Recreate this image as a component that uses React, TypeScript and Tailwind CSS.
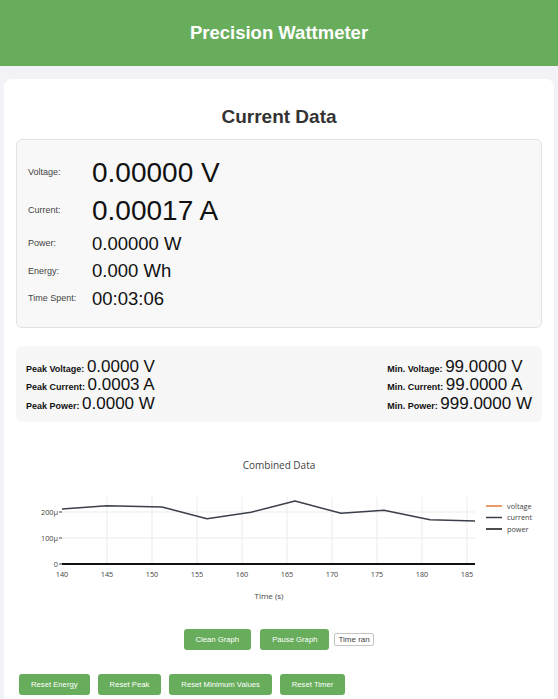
import React from 'react'

const readings = [
  { label: 'Voltage:', value: '0.00000 V', big: true },
  { label: 'Current:', value: '0.00017 A', big: true },
  { label: 'Power:', value: '0.00000 W', big: false },
  { label: 'Energy:', value: '0.000 Wh', big: false },
  { label: 'Time Spent:', value: '00:03:06', big: false },
]

const peaks = [
  { label: 'Peak Voltage:', value: '0.0000 V' },
  { label: 'Peak Current:', value: '0.0003 A' },
  { label: 'Peak Power:', value: '0.0000 W' },
]

const mins = [
  { label: 'Min. Voltage:', value: '99.0000 V' },
  { label: 'Min. Current:', value: '99.0000 A' },
  { label: 'Min. Power:', value: '999.0000 W' },
]

// current trace, in page pixels
const currentPts: [number, number][] = [
  [62, 509], [107, 505.7], [162, 507], [207, 518.7], [251, 512.3],
  [295, 501], [341, 513.3], [384, 510.3], [430, 519.7], [475, 521],
]

const xTicks = [140, 145, 150, 155, 160, 165, 170, 175, 180, 185]

function CombinedChart() {
  const font = "'Open Sans', 'Liberation Sans', sans-serif"
  return (
    <svg width="526" height="170" viewBox="16 440 526 170" className="mt-[18px] block">
      <text x="279" y="468.5" textAnchor="middle" fontSize="10" fill="#444" fontFamily={font}>
        Combined Data
      </text>

      {/* grid */}
      {xTicks.map((t) => {
        const x = 62 + (t - 140) * 9
        return (
          <g key={t}>
            {t !== 140 && <line x1={x} y1="497" x2={x} y2="564" stroke="#ebebeb" strokeWidth="1" />}
            <text x={x} y="576.5" textAnchor="middle" fontSize="7.3" fill="#444" fontFamily={font}>
              {t}
            </text>
          </g>
        )
      })}
      <line x1="62" y1="512" x2="475" y2="512" stroke="#ebebeb" strokeWidth="1" />
      <line x1="62" y1="538" x2="475" y2="538" stroke="#ebebeb" strokeWidth="1" />

      {/* y ticks */}
      {[
        ['200µ', 512],
        ['100µ', 538],
        ['0', 564],
      ].map(([lbl, y]) => (
        <g key={lbl as string}>
          <line x1="59" y1={y as number} x2="62" y2={y as number} stroke="#444" strokeWidth="1" />
          <text x="58" y={(y as number) + 2.6} textAnchor="end" fontSize="7.3" fill="#444" fontFamily={font}>
            {lbl}
          </text>
        </g>
      ))}

      {/* traces */}
      <line x1="62" y1="564" x2="475" y2="564" stroke="#e07b39" strokeWidth="2" />
      <line x1="62" y1="564" x2="475" y2="564" stroke="#111" strokeWidth="2" />
      <polyline
        points={currentPts.map((p) => p.join(',')).join(' ')}
        fill="none"
        stroke="#3a3f4a"
        strokeWidth="1.5"
        strokeLinejoin="round"
      />

      {/* legend */}
      {[
        ['voltage', '#e07b39', 506],
        ['current', '#3a3f4a', 517.5],
        ['power', '#111', 529],
      ].map(([name, color, y]) => (
        <g key={name as string}>
          <line x1="486" y1={y as number} x2="502" y2={y as number} stroke={color as string} strokeWidth="1.5" />
          <text x="507" y={(y as number) + 2.5} fontSize="7.3" fill="#444" fontFamily={font}>
            {name}
          </text>
        </g>
      ))}

      <text x="269" y="598.5" textAnchor="middle" fontSize="8" fill="#444" fontFamily={font}>
        Time (s)
      </text>
    </svg>
  )
}

export default function App() {
  const btn =
    'h-[21px] rounded-[3px] bg-[#68ad5c] px-3 text-[7.7px] leading-none text-white'

  return (
    <div className="min-h-[699px] bg-[#f2f2f7] font-['Liberation_Sans',Arial,sans-serif] text-[#111]">
      {/* header */}
      <header className="flex h-[66px] items-center justify-center bg-[#68ad5c]">
        <h1 className="text-[18.5px] font-bold text-white">Precision Wattmeter</h1>
      </header>

      {/* main card */}
      <main className="mx-1 mt-[13px] rounded-lg bg-white px-3 pt-[26px] pb-6">
        <h2 className="mb-[10px] h-[24px] text-center text-[19px] font-bold leading-[24px] text-[#333]">
          Current Data
        </h2>

        {/* live readings */}
        <div className="rounded-md border border-[#e2e2e2] bg-[#f8f8f8] px-[11px] py-[14px]">
          {readings.map((r) => (
            <div key={r.label} className={`flex items-center ${r.big ? 'h-[38px]' : 'h-[27.5px]'}`}>
              <span className="w-[64px] shrink-0 text-[9px] text-[#444]">{r.label}</span>
              <span className={r.big ? 'text-[28px] leading-none' : 'text-[18.5px] leading-none'}>{r.value}</span>
            </div>
          ))}
        </div>

        {/* peak / min */}
        <div className="mt-[18px] flex justify-between rounded-md bg-[#f7f7f7] px-[10px] pt-[12px] pb-[9px]">
          <div>
            {peaks.map((p) => (
              <div key={p.label} className="h-[18.5px] leading-[18.5px] whitespace-nowrap">
                <span className="text-[9px] font-bold">{p.label} </span>
                <span className="text-[17px]">{p.value}</span>
              </div>
            ))}
          </div>
          <div>
            {mins.map((p) => (
              <div key={p.label} className="h-[18.5px] leading-[18.5px] whitespace-nowrap">
                <span className="text-[9px] font-bold">{p.label} </span>
                <span className="text-[17px]">{p.value}</span>
              </div>
            ))}
          </div>
        </div>

        <CombinedChart />

        {/* graph controls */}
        <div className="mt-[19px] flex items-center justify-center">
          <button className={`${btn} mr-[9px]`}>Clean Graph</button>
          <button className={`${btn} mr-[5px]`}>Pause Graph</button>
          <input
            type="text"
            placeholder="Time range (s)"
            className="h-[13px] w-[40px] rounded-[2px] border border-[#c4c4c4] bg-white px-[3px] text-[8px] outline-none placeholder:text-[#444]"
          />
        </div>

        {/* reset controls */}
        <div className="mt-[24px] flex gap-2 pl-[3px]">
          <button className={btn}>Reset Energy</button>
          <button className={btn}>Reset Peak</button>
          <button className={btn}>Reset Minimum Values</button>
          <button className={btn}>Reset Timer</button>
        </div>
      </main>
    </div>
  )
}
